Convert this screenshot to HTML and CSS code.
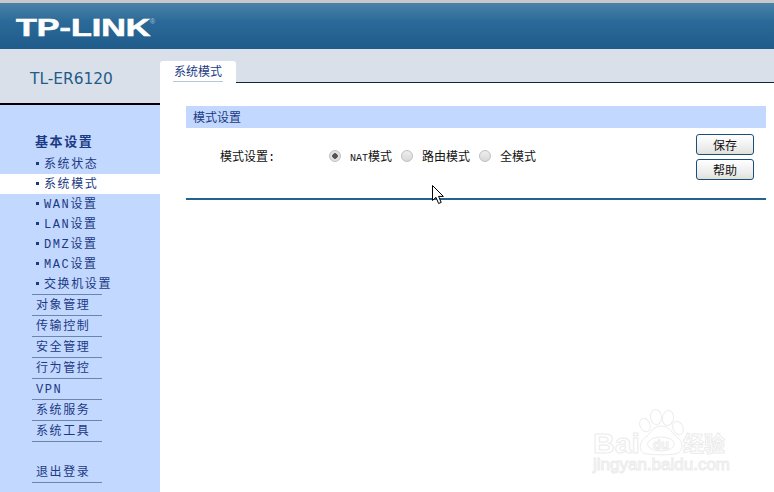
FILE: index.html
```
<!DOCTYPE html>
<html lang="zh">
<head>
<meta charset="utf-8">
<title>TL-ER6120</title>
<link rel="stylesheet" href="styles.css">
</head>
<body>
<div class="page">
  <div class="topstrip"></div>
  <header class="header">
    <div class="logo"><span class="logo-text">TP-LINK</span><span class="logo-mark">®</span></div>
  </header>
  <div class="main">
    <aside class="sidebar">
      <div class="model">TL-ER6120</div>
      <nav class="nav">
        <div class="nav-title">基本设置</div>
        <ul class="sub">
          <li class="sub-item"><span class="dot"></span>系统状态</li>
          <li class="sub-item active"><span class="dot"></span>系统模式</li>
          <li class="sub-item"><span class="dot"></span>WAN设置</li>
          <li class="sub-item"><span class="dot"></span>LAN设置</li>
          <li class="sub-item"><span class="dot"></span>DMZ设置</li>
          <li class="sub-item"><span class="dot"></span>MAC设置</li>
          <li class="sub-item"><span class="dot"></span>交换机设置</li>
        </ul>
        <div class="nav-item">对象管理</div>
        <div class="nav-item">传输控制</div>
        <div class="nav-item">安全管理</div>
        <div class="nav-item">行为管控</div>
        <div class="nav-item">VPN</div>
        <div class="nav-item">系统服务</div>
        <div class="nav-item">系统工具</div>
        <div class="nav-item logout">退出登录</div>
      </nav>
    </aside>
    <main class="content">
      <div class="tabbar"><div class="tab"><span class="tab-label">系统模式</span></div></div>
      <section class="panel">
        <h2 class="panel-title">模式设置</h2>
        <div class="form-row">
          <div class="field">
            <span class="field-label">模式设置:</span>
            <label class="opt"><input class="radio" type="radio" name="mode" checked><span><span class="latin">NAT</span>模式</span></label>
            <label class="opt"><input class="radio" type="radio" name="mode"><span>路由模式</span></label>
            <label class="opt"><input class="radio" type="radio" name="mode"><span>全模式</span></label>
          </div>
          <div class="actions">
            <button class="btn" type="button">保存</button>
            <button class="btn" type="button">帮助</button>
          </div>
        </div>
      </section>
    </main>
  </div>
  <svg class="cursor" width="14" height="21" viewBox="0 0 14 21"><path d="M1.5 1.5 V16.5 L5 13.3 L7.6 19.5 L10.2 18.4 L7.6 12.4 L12.4 12.4 Z" fill="#fff" stroke="#000" stroke-width="1"/></svg>
  <div class="watermark">
    <svg width="160" height="80" viewBox="0 0 160 80">
      <g fill="#fff" stroke="#ececec" stroke-width="1">
        <ellipse cx="64" cy="10" rx="5.5" ry="7.5" transform="rotate(-8 64 10)"/>
        <ellipse cx="76" cy="11" rx="5.5" ry="7.5" transform="rotate(10 76 11)"/>
        <ellipse cx="53" cy="18" rx="5" ry="7" transform="rotate(-25 53 18)"/>
        <ellipse cx="86" cy="21" rx="5" ry="7" transform="rotate(-25 86 21)"/>
        <path d="M69 19 C61 19 59 26 55 29 C47 34 45 46 55 47 C62 48 76 48 83 47 C92 45 92 35 85 30 C80 27 78 19 69 19 Z"/>
        <ellipse cx="69" cy="37" rx="13.5" ry="7"/>
        <text x="61" y="42" class="wm-du">du</text>
        <text x="1" y="46" class="wm-bai" textLength="47" lengthAdjust="spacingAndGlyphs">Bai</text>
        <text x="91" y="44" class="wm-cn">经验</text>
        <text x="1" y="63" class="wm-url" textLength="137" lengthAdjust="spacingAndGlyphs">jingyan.baidu.com</text>
      </g>
    </svg>
  </div>
</div>
</body>
</html>
```
FILE: styles.css
```
* { box-sizing: border-box; }
html, body { margin: 0; padding: 0; background: #fff; }
.page {
  position: relative;
  width: 774px;
  height: 492px;
  overflow: hidden;
  font-family: "Liberation Mono", "Noto Sans CJK SC", monospace;
  font-size: 12px;
}
.topstrip { height: 3px; background: #c9c9c9; }
.header {
  height: 46px;
  background: linear-gradient(#4a82a8, #2b6a98 40%, #1f5b8b);
  display: flex;
  align-items: center;
  padding-left: 16px;
}
.logo { display: flex; align-items: flex-start; padding-top: 4px; }
.logo-text {
  display: inline-block;
  width: 134px;
  font: bold 24px/24px "Liberation Sans", sans-serif;
  color: #fff;
  -webkit-text-stroke: 0.6px #fff;
  transform: scaleX(1.42);
  transform-origin: 0 0;
  white-space: nowrap;
}
.logo-mark {
  font: 7px/8px "Liberation Sans", sans-serif;
  color: #a9c3d6;
  margin-top: 2px;
}
.main { display: flex; height: 443px; }
.sidebar { width: 160px; background: #c3d8fe; flex: none; }
.model {
  height: 56px;
  background: #d9e0ea;
  border-bottom: 2px solid #000;
  padding: 20px 0 0 30px;
  font: 15.4px/20px "DejaVu Sans", sans-serif;
  color: #1f5c8a;
}
.nav { padding: 27px 0 0; color: #1c3a84; }
.nav-title {
  height: 22px;
  line-height: 22px;
  padding-left: 35px;
  font-weight: bold;
  font-size: 13px;
  letter-spacing: 1.6px;
}
.sub { list-style: none; margin: 0; padding: 0 0 1px; position: relative; }
.sub::after {
  content: "";
  position: absolute;
  left: 32px;
  width: 70px;
  bottom: 0;
  height: 1px;
  background: #6a86a8;
}
.sub-item {
  height: 20px;
  line-height: 22px;
  padding-left: 35px;
  display: flex;
  align-items: flex-start;
  letter-spacing: 1.6px;
}
.sub-item.active { background: #fff; }
.dot {
  width: 3px;
  height: 3px;
  background: #1c3a84;
  margin: 8px 5px 0 1px;
  flex: none;
}
.nav-item {
  width: 70px;
  height: 21px;
  margin-left: 32px;
  line-height: 22px;
  padding-left: 4px;
  border-bottom: 1px solid #6a86a8;
  letter-spacing: 1.6px;
  white-space: nowrap;
}
.logout { margin-top: 20px; }
.content { flex: 1; min-width: 0; }
.tabbar {
  height: 34px;
  background: #d9e0ea;
  padding-top: 12px;
  border-bottom: 1px solid #10253a;
}
.tab {
  width: 76px;
  height: 22px;
  background: #fff;
  border-radius: 3px 3px 0 0;
  padding-left: 13px;
}
.tab-label {
  display: block;
  width: 50px;
  height: 21px;
  line-height: 20px;
  text-align: center;
  color: #1c3a84;
  border-bottom: 1px solid #b9c6d4;
  font-family: "Noto Sans CJK SC", sans-serif;
}
.panel { margin: 23px 8px 0 26px; border-bottom: 2px solid #246390; }
.panel-title {
  margin: 0;
  height: 22px;
  background: #c3d8fe;
  padding-left: 7px;
  font: normal 12px/22px "Noto Sans CJK SC", sans-serif;
  color: #1c3a84;
}
.form-row { height: 70px; display: flex; justify-content: space-between; padding-right: 12px; }
.field { display: flex; align-items: center; height: 56px; padding-left: 34px; color: #111; }
.field-label { width: 109px; }
.opt { display: flex; align-items: center; white-space: nowrap; margin-right: 9px; }
.latin { font-size: 10px; }
.radio {
  appearance: none;
  width: 12px;
  height: 12px;
  margin: 0 9px 0 0;
  border: 1px solid #c0c0c0;
  border-radius: 50%;
  background: linear-gradient(#eeeeee, #d8d8d8);
}
.radio:checked { background: radial-gradient(circle, #555 0 2.5px, #e2e2e2 3px); }
.actions { display: flex; flex-direction: column; gap: 4px; padding-top: 6px; }
.btn {
  width: 58px;
  height: 21px;
  padding: 0;
  border: 1px solid #1a4f7c;
  border-radius: 3px;
  background: linear-gradient(#fff, #ececec 70%, #e0e0d8);
  font: 12px/18px "Noto Sans CJK SC", sans-serif;
  color: #111;
}
.cursor { position: absolute; left: 431px; top: 184px; }
.watermark { position: absolute; left: 592px; top: 407px; }
.wm-du { font: bold 13px "Liberation Sans", sans-serif; }
.wm-bai { font: bold 28px "Liberation Sans", sans-serif; }
.wm-cn { font: bold 21px "Noto Sans CJK SC", sans-serif; }
.wm-url { font: 16px "Liberation Sans", sans-serif; }
```
